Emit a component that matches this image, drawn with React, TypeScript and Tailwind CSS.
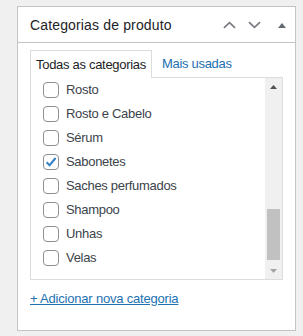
const categories = [
  { name: 'Rosto', checked: false },
  { name: 'Rosto e Cabelo', checked: false },
  { name: 'Sérum', checked: false },
  { name: 'Sabonetes', checked: true },
  { name: 'Saches perfumados', checked: false },
  { name: 'Shampoo', checked: false },
  { name: 'Unhas', checked: false },
  { name: 'Velas', checked: false },
];

function Checkbox({ checked }: { checked: boolean }) {
  return (
    <span className="relative h-4 w-4 shrink-0 rounded-[4px] border border-[#8c8f94] bg-white">
      {checked && (
        <svg viewBox="0 0 16 16" className="absolute -left-px -top-px h-4 w-4">
          <path d="M3.6 8.2 L6.6 11.2 L12.6 4" fill="none" stroke="#3582c4" strokeWidth="2" />
        </svg>
      )}
    </span>
  );
}

export default function App() {
  return (
    <div
      className="h-[336px] w-[303px] bg-[#f0f0f1] pl-[17px] pr-[7px] pt-[6px]"
      style={{ fontFamily: '"Liberation Sans", Arial, sans-serif' }}
    >
      <div className="h-[325px] border border-[#c3c4c7] bg-white">
        {/* Header */}
        <div className="flex h-[36px] items-center border-b border-[#c3c4c7] pl-3 pr-2">
          <h2 className="flex-1 text-[14px] leading-[20px] tracking-[0.15px] text-[#1d2327]">Categorias de produto</h2>
          <div className="flex items-center">
            <svg viewBox="0 0 14 8" className="mr-[12px] h-[8px] w-[13px]">
              <path d="M1 7 L7 1.5 L13 7" fill="none" stroke="#787c82" strokeWidth="1.8" />
            </svg>
            <svg viewBox="0 0 14 8" className="mr-[17px] h-[8px] w-[13px]">
              <path d="M1 1 L7 6.5 L13 1" fill="none" stroke="#787c82" strokeWidth="1.8" />
            </svg>
            <svg viewBox="0 0 8 6" className="mr-[1px] h-[6px] w-[8px]">
              <path d="M0 6 L4 1 L8 6 Z" fill="#646970" />
            </svg>
          </div>
        </div>

        {/* Body */}
        <div className="px-3 pt-[7px]">
          <div className="flex items-end text-[13px] leading-[19px] tracking-[-0.3px]">
            <div className="relative z-10 -mb-px border border-b-0 border-[#dcdcde] bg-white px-[5px] py-[4px] text-[#1d2327]">
              Todas as categorias
            </div>
            <div className="px-[10px] py-[4px] text-[#2271b1]">Mais usadas</div>
          </div>

          <div className="flex h-[203px] border border-[#dcdcde]">
            <ul className="flex-1">
              {categories.map((c) => (
                <li
                  key={c.name}
                  className="flex h-[24px] items-center pl-3 text-[13px] tracking-[-0.3px] text-[#3c434a]"
                >
                  <Checkbox checked={c.checked} />
                  <span className="ml-[7px]">{c.name}</span>
                </li>
              ))}
            </ul>
            <div className="flex w-[17px] flex-col items-center bg-[#f0f0f0]">
              <div className="flex h-[17px] items-center justify-center">
                <svg viewBox="0 0 7 4" className="h-[4px] w-[7px]">
                  <path d="M0 4 L3.5 0 L7 4 Z" fill="#505050" />
                </svg>
              </div>
              <div className="w-full flex-1">
                <div className="mx-[2px] mt-[114px] h-[51px] bg-[#c1c1c1]" />
              </div>
              <div className="flex h-[17px] items-center justify-center">
                <svg viewBox="0 0 7 4" className="h-[4px] w-[7px]">
                  <path d="M0 0 L3.5 4 L7 0 Z" fill="#a3a3a3" />
                </svg>
              </div>
            </div>
          </div>

          <a
            href="#"
            className="mt-[9px] block text-[13px] leading-[20px] tracking-[-0.2px] text-[#2271b1] underline"
          >
            + Adicionar nova categoria
          </a>
        </div>
      </div>
    </div>
  );
}
